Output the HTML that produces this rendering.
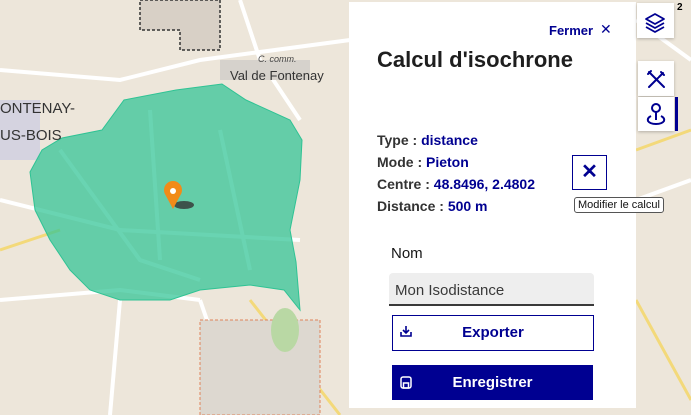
<!DOCTYPE html><html><head><style>
body{margin:0;width:691px;height:415px;overflow:hidden;position:relative;background:#ede6da;font-family:"Liberation Sans",sans-serif}
.p{position:absolute}
.panel{left:349px;top:2px;width:287px;height:406px;background:#fff}
.b{color:#000091;font-weight:bold}
.t{font-size:14px;font-weight:bold;color:#333;position:absolute;left:28px}
.ctl{background:#fff;position:absolute;box-shadow:0 1px 3px rgba(0,0,0,.25)}
</style></head><body>
<svg class="p" style="left:0;top:0" width="691" height="415">
<g stroke="#fff" stroke-width="4" fill="none">
<path d="M0 70 L120 80 L200 60 L350 40"/><path d="M240 0 L260 60 L300 120"/><path d="M0 300 L120 290 L200 300"/>
<path d="M120 300 L110 415"/><path d="M200 300 L240 415"/><path d="M636 20 L691 60"/><path d="M636 200 L691 180"/>
<path d="M0 200 L120 230 L300 240"/><path d="M60 150 L140 260 L200 280"/><path d="M150 110 L160 260"/><path d="M220 130 L250 270"/>
</g>
<g stroke="#f3d97a" stroke-width="3" fill="none"><path d="M0 250 L60 230"/><path d="M250 300 L340 415"/><path d="M636 150 L691 130"/><path d="M636 300 L691 400"/></g>
<path d="M140 0 L220 0 L220 50 L180 50 L180 30 L140 30Z" fill="#d8d0c6" stroke="#333" stroke-width="1.5" stroke-dasharray="3 2"/>
<rect x="220" y="60" width="90" height="20" fill="#d6d2cc"/>
<rect x="0" y="100" width="40" height="60" fill="#d5d3e0"/>
<rect x="200" y="320" width="120" height="95" fill="#ddd8d0" stroke="#e0835a" stroke-dasharray="3 2"/>
<ellipse cx="285" cy="330" rx="14" ry="22" fill="#b9d8a4"/>
<polygon points="30,172 42,150 62,138 102,130 124,100 176,90 222,84 246,100 290,120 302,140 300,180 290,230 296,262 300,310 284,290 250,285 200,290 170,300 120,300 90,290 70,270 50,240 35,210" fill="#2fc394" fill-opacity=".72" stroke="#2fc394"/>
<ellipse cx="184" cy="205" rx="10" ry="4" fill="#333" opacity=".8"/>
<path d="M173 209 L165.5 195 A9 9 0 1 1 180.5 195 Z" fill="#f18b18"/><circle cx="173" cy="191" r="3" fill="#fff"/>
<text x="0" y="113" font-size="15" fill="#333">ONTENAY-</text><text x="0" y="140" font-size="15" fill="#333">US-BOIS</text>
<text x="230" y="80" font-size="13" fill="#333">Val de Fontenay</text><text x="258" y="62" font-size="9" fill="#444" font-style="italic">C. comm.</text>
</svg>
<div class="p panel">
<div class="p b" style="left:200px;top:21px;font-size:13px">Fermer</div><div class="p b" style="left:251px;top:19px;font-size:14px;font-weight:normal">✕</div>
<div class="p" style="left:28px;top:45px;font-size:22px;font-weight:bold;color:#1e1e1e">Calcul d'isochrone</div>
<div class="t" style="top:130px">Type : <span class="b">distance</span></div>
<div class="t" style="top:152px">Mode : <span class="b">Pieton</span></div>
<div class="t" style="top:174px">Centre : <span class="b">48.8496, 2.4802</span></div>
<div class="t" style="top:196px">Distance : <span class="b">500 m</span></div>
<div class="p" style="left:223px;top:153px;width:33px;height:33px;border:1px solid #000091;color:#000091;font-size:20px;font-weight:bold;text-align:center;line-height:33px">✕</div>
<div class="p" style="left:42px;top:243px;font-size:15px;color:#161616">Nom</div>
<div class="p" style="left:40px;top:271px;width:205px;height:33px;background:#eee;border-bottom:2px solid #3a3a3a;border-radius:4px 4px 0 0;font-size:15px;color:#3a3a3a;line-height:35px;box-sizing:border-box;padding-left:6px">Mon Isodistance</div>
<div class="p b" style="left:43px;top:313px;width:200px;height:34px;border:1px solid #000091;font-size:15px;line-height:34px;text-align:center">Exporter</div>
<svg class="p" style="left:51px;top:323px" width="12" height="12"><g stroke="#000091" stroke-width="1.6" fill="none"><path d="M6 1 V8 M3 5 L6 8 L9 5"/><path d="M1 7 V11 H11 V7"/></g></svg>
<div class="p" style="left:43px;top:363px;width:201px;height:35px;background:#000091;color:#fff;font-weight:bold;font-size:15px;line-height:35px;text-align:center">Enregistrer</div>
<svg class="p" style="left:51px;top:374px" width="12" height="13"><g stroke="#fff" stroke-width="1.5" fill="none"><rect x="1" y="1" width="10" height="11" rx="2"/><rect x="3.5" y="7" width="5" height="5"/></g></svg>
</div>
<div class="p" style="left:574px;top:197px;background:#fff;border:1px solid #555;border-radius:3px;font-size:11px;padding:1px 3px;color:#111">Modifier le calcul</div>
<div class="ctl" style="left:637px;top:3px;width:37px;height:35px"><svg width="37" height="35"><g fill="none" stroke="#000091" stroke-width="1.8" stroke-linejoin="round"><path d="M18 11 L27 16 L18 21 L9 16Z"/><path d="M9 20 L18 25 L27 20"/><path d="M9 24 L18 29 L27 24"/></g></svg></div>
<div class="p" style="left:677px;top:2px;font-size:10px;font-weight:bold">2</div>
<div class="ctl" style="left:638px;top:61px;width:36px;height:35px"><svg width="36" height="35"><g stroke="#000091" stroke-width="2" fill="none" stroke-linecap="round"><path d="M11 11 L26 26"/><path d="M11 26 L20 17"/><path d="M21 16 L25 12 M23 11 L26 14"/><path d="M10 13 L13 10"/></g></svg></div>
<div class="ctl" style="left:638px;top:97px;width:36px;height:34px"><svg width="36" height="34"><g stroke="#000091" stroke-width="2" fill="none"><circle cx="18" cy="11" r="4"/><path d="M18 15 V23"/><path d="M13 19 Q9 21 10 24 Q12 27 18 27 Q24 27 26 24 Q27 21 23 19"/></g></svg></div>
<div class="p" style="left:675px;top:97px;width:3px;height:34px;background:#000091"></div>
</body></html>
